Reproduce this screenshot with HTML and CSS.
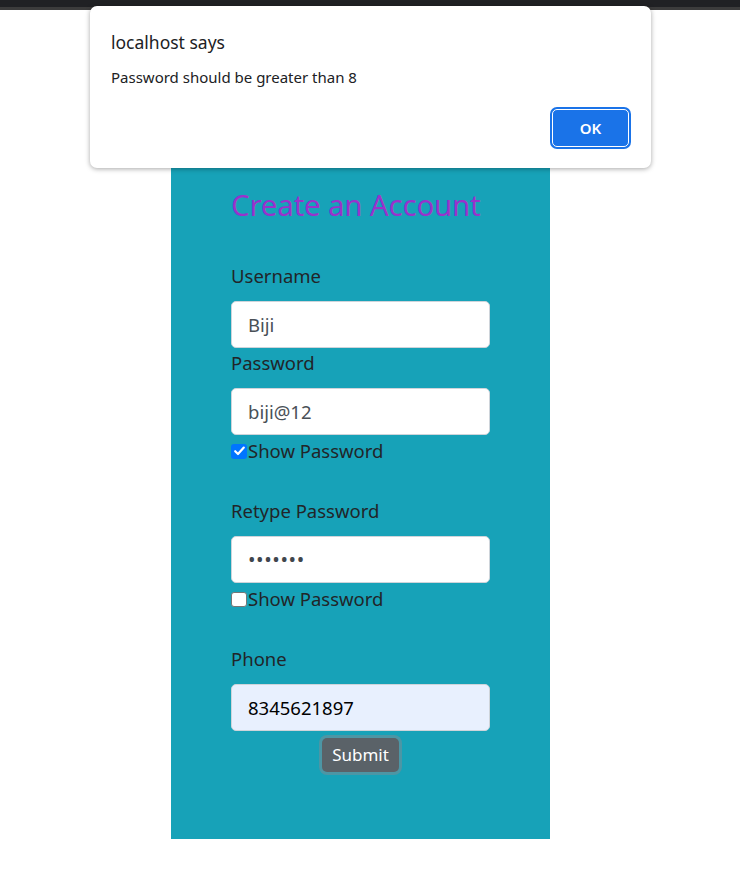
FILE: index.html
```html
<!DOCTYPE html>
<html>
<head>
<meta charset="utf-8">
<link rel="stylesheet" href="styles.css">
</head>
<body>
<div class="chrome"><div class="chrome-top"></div><div class="chrome-bottom"></div></div>
<main class="page">
  <form class="panel">
    <h4 class="title">Create an Account</h4>
    <label class="lbl lbl-first">Username</label>
    <div class="input">Biji</div>
    <label class="lbl">Password</label>
    <div class="input">biji@12</div>
    <div class="check-row"><span class="cb cb-on"><svg viewBox="0 0 15 14" width="15" height="14"><path d="M3.2 7.2 L6 10 L11.8 3.6" fill="none" stroke="#fff" stroke-width="2.2" stroke-linecap="round" stroke-linejoin="round"/></svg></span><span>Show Password</span></div>
    <label class="lbl lbl-gap">Retype Password</label>
    <div class="input dots">•••••••</div>
    <div class="check-row"><span class="cb cb-off"></span><span>Show Password</span></div>
    <label class="lbl lbl-gap">Phone</label>
    <div class="input autofill">8345621897</div>
    <div class="btn-row"><span class="submit">Submit</span></div>
  </form>
</main>
<div class="dialog">
  <div class="dlg-title">localhost says</div>
  <div class="dlg-msg">Password should be greater than 8</div>
  <div class="dlg-actions"><span class="ok">OK</span></div>
</div>
</body>
</html>
```
FILE: styles.css
```css
html, body {
  margin: 0;
  padding: 0;
  background: #ffffff;
  font-family: "Noto Sans", "Open Sans", sans-serif;
}
.chrome-top {
  height: 7px;
  background: #202124;
}
.chrome-bottom {
  height: 3px;
  background: #3c3c3c;
}
.page {
  display: flex;
  padding-left: 171px;
}
.panel {
  width: 379px;
  box-sizing: border-box;
  background: #17a2b8;
  padding: 177px 60px 67px 60px;
  display: flex;
  flex-direction: column;
  align-items: stretch;
  color: #212529;
}
.title {
  margin: 0;
  font-size: 29.5px;
  font-weight: 400;
  line-height: 36px;
  color: #9932cc;
  letter-spacing: -0.2px;
}
.lbl {
  display: block;
  font-size: 18.5px;
  line-height: 30px;
  margin-bottom: 10px;
}
.lbl-first { margin-top: 38px; }
.lbl-gap { margin-top: 30px; }
.input {
  width: 259px;
  height: 47px;
  box-sizing: border-box;
  background: #fff;
  border: 1px solid #ced4da;
  border-radius: 5px;
  padding: 0 16px;
  font-size: 18.5px;
  line-height: 45px;
  color: #495057;
}
.input.dots {
  font-size: 20px;
  letter-spacing: 0.6px;
  color: #3f464d;
}
.input.autofill {
  background: #e8f0fe;
  color: #000;
}
.check-row {
  display: flex;
  align-items: center;
  height: 30px;
  margin-top: 1px;
  font-size: 18.5px;
  line-height: 30px;
}
.cb {
  width: 16px;
  height: 15px;
  box-sizing: border-box;
  border-radius: 3px;
  margin-right: 1px;
  display: inline-flex;
  align-items: center;
  justify-content: center;
}
.cb-on {
  background: #0075ff;
}
.cb-off {
  background: #fff;
  border: 1px solid #767676;
}
.btn-row {
  display: flex;
  justify-content: center;
  margin-top: 7px;
}
.submit {
  background: #5a6268;
  color: #fff;
  font-size: 17px;
  line-height: 26px;
  padding: 4px 10px;
  border-radius: 5px;
  box-shadow: 0 0 0 3px rgba(130, 138, 145, 0.5);
}
.dialog {
  position: absolute;
  left: 90px;
  top: 6px;
  width: 561px;
  height: 162px;
  box-sizing: border-box;
  background: #fff;
  border-radius: 7px;
  box-shadow: 0 1px 5px rgba(0, 0, 0, 0.35);
  padding: 24px 20px 19px 21px;
  display: flex;
  flex-direction: column;
  color: #202124;
}
.dlg-title {
  font-size: 17.5px;
  line-height: 24px;
}
.dlg-msg {
  font-size: 15px;
  line-height: 20px;
  margin-top: 13px;
}
.dlg-actions {
  margin-top: auto;
  display: flex;
  justify-content: flex-end;
}
.ok {
  width: 77px;
  height: 38px;
  box-sizing: border-box;
  margin: 2px;
  border: 1.5px solid #fff;
  box-shadow: 0 0 0 2px #1a73e8;
  border-radius: 5px;
  background: #1a73e8;
  color: #fff;
  font-weight: 600;
  font-size: 15px;
  display: flex;
  align-items: center;
  justify-content: center;
}
```
